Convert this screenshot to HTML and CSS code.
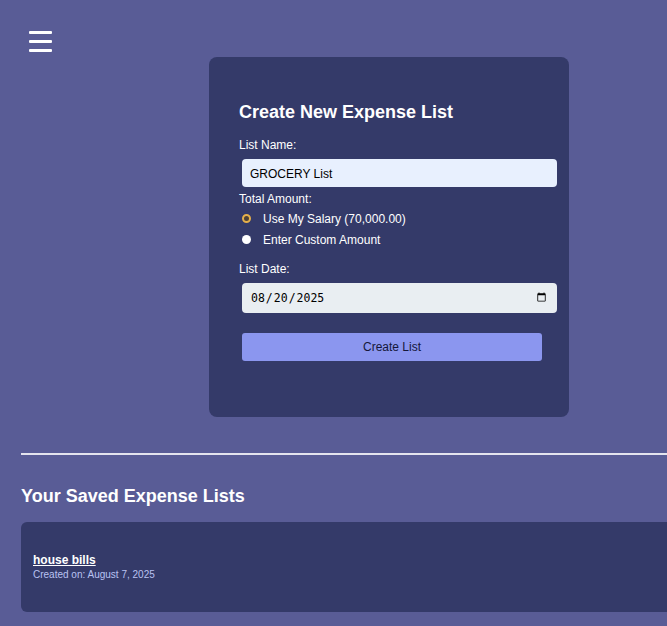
FILE: index.html
```html
<!DOCTYPE html>
<html lang="en">
<head>
<meta charset="utf-8">
<title>Expense Lists</title>
<link rel="stylesheet" href="styles.css">
</head>
<body>
<button class="menu-toggle" aria-label="Menu"><span></span><span></span><span></span></button>
<main class="page">
  <form class="create-card">
    <h2 class="card-title">Create New Expense List</h2>
    <label class="field-label" for="listName">List Name:</label>
    <input class="text-input" id="listName" type="text" value="GROCERY List">
    <span class="field-label">Total Amount:</span>
    <label class="radio-row radio-first"><input class="radio" type="radio" name="amt" checked><span>Use My Salary (70,000.00)</span></label>
    <label class="radio-row"><input class="radio" type="radio" name="amt"><span>Enter Custom Amount</span></label>
    <label class="field-label date-label" for="listDate">List Date:</label>
    <input class="date-input" id="listDate" type="date" value="2025-08-20">
    <button class="create-btn" type="button">Create List</button>
  </form>
  <hr class="divider">
  <h2 class="section-title">Your Saved Expense Lists</h2>
  <div class="saved-card">
    <a class="saved-name" href="#">house bills</a>
    <div class="saved-date">Created on: August 7, 2025</div>
  </div>
</main>
</body>
</html>
```
FILE: styles.css
```css
html, body {
  margin: 0;
  padding: 0;
  overflow: hidden;
}
body {
  background: #595c96;
  font-family: "Liberation Sans", Arial, sans-serif;
  color: #ffffff;
}
.menu-toggle {
  position: fixed;
  top: 31px;
  left: 29px;
  width: 23px;
  height: 21px;
  padding: 0;
  border: none;
  background: transparent;
  display: flex;
  flex-direction: column;
  justify-content: space-between;
  cursor: pointer;
}
.menu-toggle span {
  display: block;
  height: 3px;
  background: #ffffff;
  border-radius: 1px;
}
.page {
  width: 736px;
  padding: 57px 0 0 21px;
}
.create-card {
  width: 300px;
  margin: 0 auto;
  padding: 45px 30px 56px;
  background: #343a69;
  border-radius: 8px;
  display: flex;
  flex-direction: column;
  align-items: flex-start;
}
.card-title {
  margin: 0 0 15px;
  font-size: 18px;
  line-height: 21px;
  font-weight: bold;
}
.field-label {
  display: block;
  font-size: 12px;
  line-height: 14px;
}
.text-input {
  margin: 7px 0 5px 3px;
  width: 315px;
  height: 28px;
  box-sizing: border-box;
  padding: 1px 8px 0;
  border: none;
  border-radius: 4px;
  background: #e8f0fe;
  font-family: "Liberation Sans", Arial, sans-serif;
  font-size: 12px;
  color: #000;
}
.radio-row {
  display: flex;
  align-items: center;
  height: 21px;
  font-size: 12px;
  margin-left: 3px;
}
.radio-first { margin-top: 2px; }
.radio {
  appearance: none;
  -webkit-appearance: none;
  margin: 0 12px 0 0;
  width: 9px;
  height: 9px;
  box-sizing: border-box;
  border-radius: 50%;
  background: #ffffff;
  border: none;
}
.radio:checked {
  background: #4d4136;
  border: 2px solid #e6b04a;
}
.date-label {
  margin-top: 12px;
}
.date-input {
  margin: 7px 0 0 3px;
  width: 315px;
  height: 30px;
  box-sizing: border-box;
  padding: 0 8px;
  border: none;
  border-radius: 4px;
  background: #e9eef2;
  font-family: "DejaVu Sans Mono", "Liberation Mono", monospace;
  font-size: 11.5px;
  color: #000;
}
.create-btn {
  margin: 20px 0 0 3px;
  width: 300px;
  height: 28px;
  border: none;
  border-radius: 3px;
  background: #8b96ef;
  color: #15173a;
  font-family: "Liberation Sans", Arial, sans-serif;
  font-size: 12px;
}
.divider {
  margin: 36px 0 0;
  height: 0;
  border: none;
  border-top: 2px solid #e4e4ee;
}
.section-title {
  margin: 31px 0 15px;
  font-size: 18px;
  line-height: 21px;
  font-weight: bold;
}
.saved-card {
  background: #343a69;
  border-radius: 6px;
  padding: 31px 12px 31px;
}
.saved-name {
  display: block;
  font-size: 12px;
  line-height: 14px;
  font-weight: bold;
  color: #ffffff;
  text-decoration: underline;
}
.saved-date {
  margin-top: 2px;
  font-size: 10px;
  line-height: 12px;
  color: #b9c2f2;
}
```
